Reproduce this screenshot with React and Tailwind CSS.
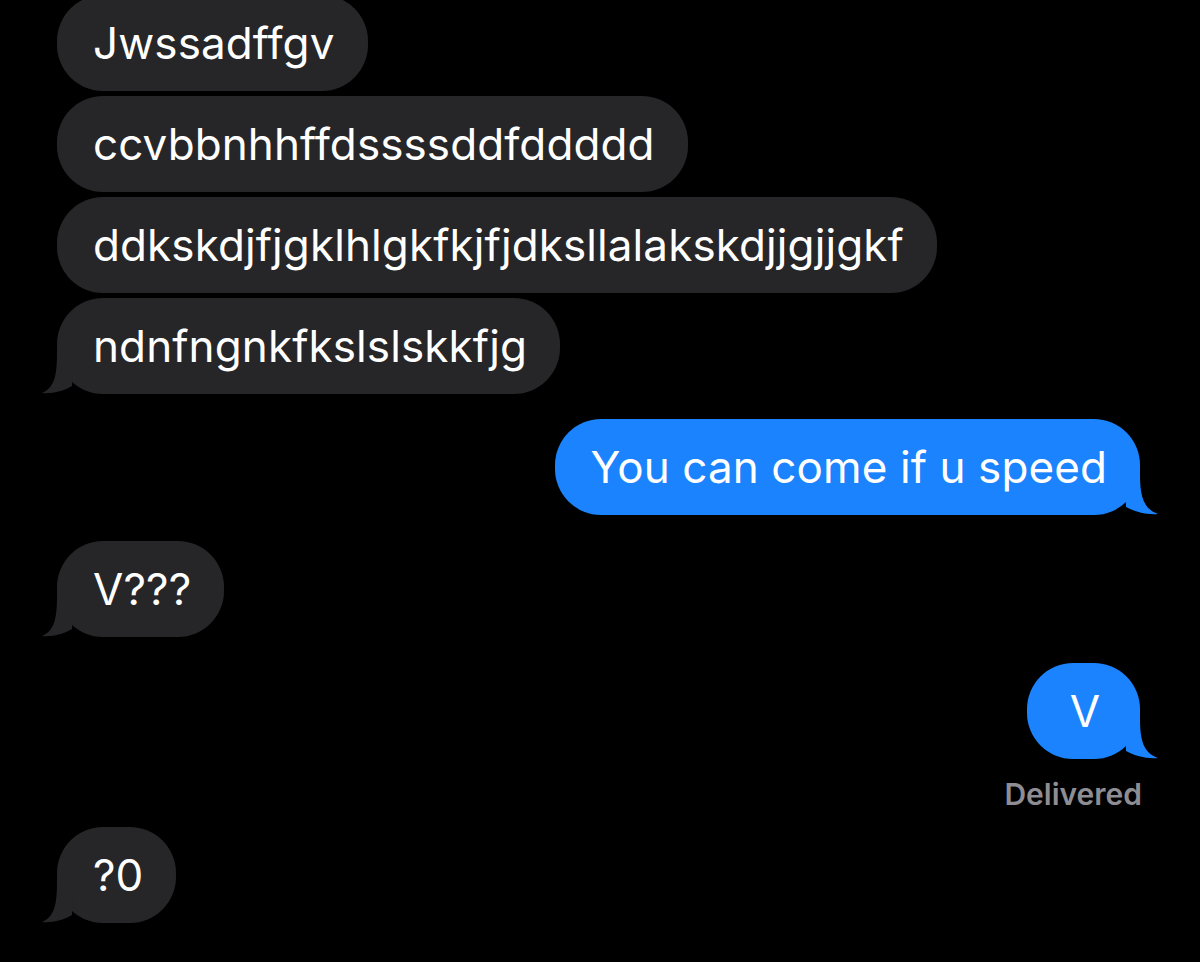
import React from 'react';

const font = { fontFamily: 'Inter, "Noto Sans", sans-serif' };

function Tail({ side, color }) {
  if (side === 'left') {
    return (
      <svg className="absolute bottom-0 -left-[15px] w-[50px] h-[50px]" viewBox="0 0 50 50">
        <path d="M15 0 L15 10 C15 32 12 44 0 49 C10 50 22 47 30 42 L32 0 Z" fill={color} />
      </svg>
    );
  }
  return (
    <svg className="absolute bottom-0 -right-[18px] w-[50px] h-[50px]" viewBox="0 0 50 50">
      <path d="M32 0 L32 10 C32 32 36 44 50 49 C39 50 27 47 18 42 L16 0 Z" fill={color} />
    </svg>
  );
}

function Bubble({ text, mine, tail, className = '' }) {
  const color = mine ? '#1a83fd' : '#262628';
  return (
    <div
      className={`relative h-[96px] min-w-[113px] rounded-[46px] pl-[36px] pr-[33px] flex items-center justify-center text-white text-[44px] tracking-[0.1px] whitespace-nowrap ${
        mine ? 'self-end bg-[#1a83fd]' : 'self-start bg-[#262628]'
      } ${className}`}
    >
      {tail && <Tail side={mine ? 'right' : 'left'} color={color} />}
      <span className="relative">{text}</span>
    </div>
  );
}

export default function App() {
  return (
    <div className="w-[1200px] h-[962px] bg-black overflow-hidden" style={font}>
      <div className="flex flex-col pl-[57px] pr-[60px] -mt-[5px]">
        <Bubble text="Jwssadffgv" />
        <Bubble text="ccvbbnhhffdssssddfddddd" className="mt-[5px]" />
        <Bubble text="ddkskdjfjgklhlgkfkjfjdksllalakskdjjgjjgkf" className="mt-[5px]" />
        <Bubble text="ndnfngnkfkslslskkfjg" tail className="mt-[5px]" />
        <Bubble text="You can come if u speed" mine tail className="mt-[25px]" />
        <Bubble text="V???" tail className="mt-[26px]" />
        <Bubble text="V" mine tail className="mt-[26px]" />
        <div className="self-end mt-[20px] -mr-[2px] text-[30px] font-semibold text-[#8d8d93] leading-none">Delivered</div>
        <Bubble text="?0" tail className="mt-[18px]" />
      </div>
    </div>
  );
}
